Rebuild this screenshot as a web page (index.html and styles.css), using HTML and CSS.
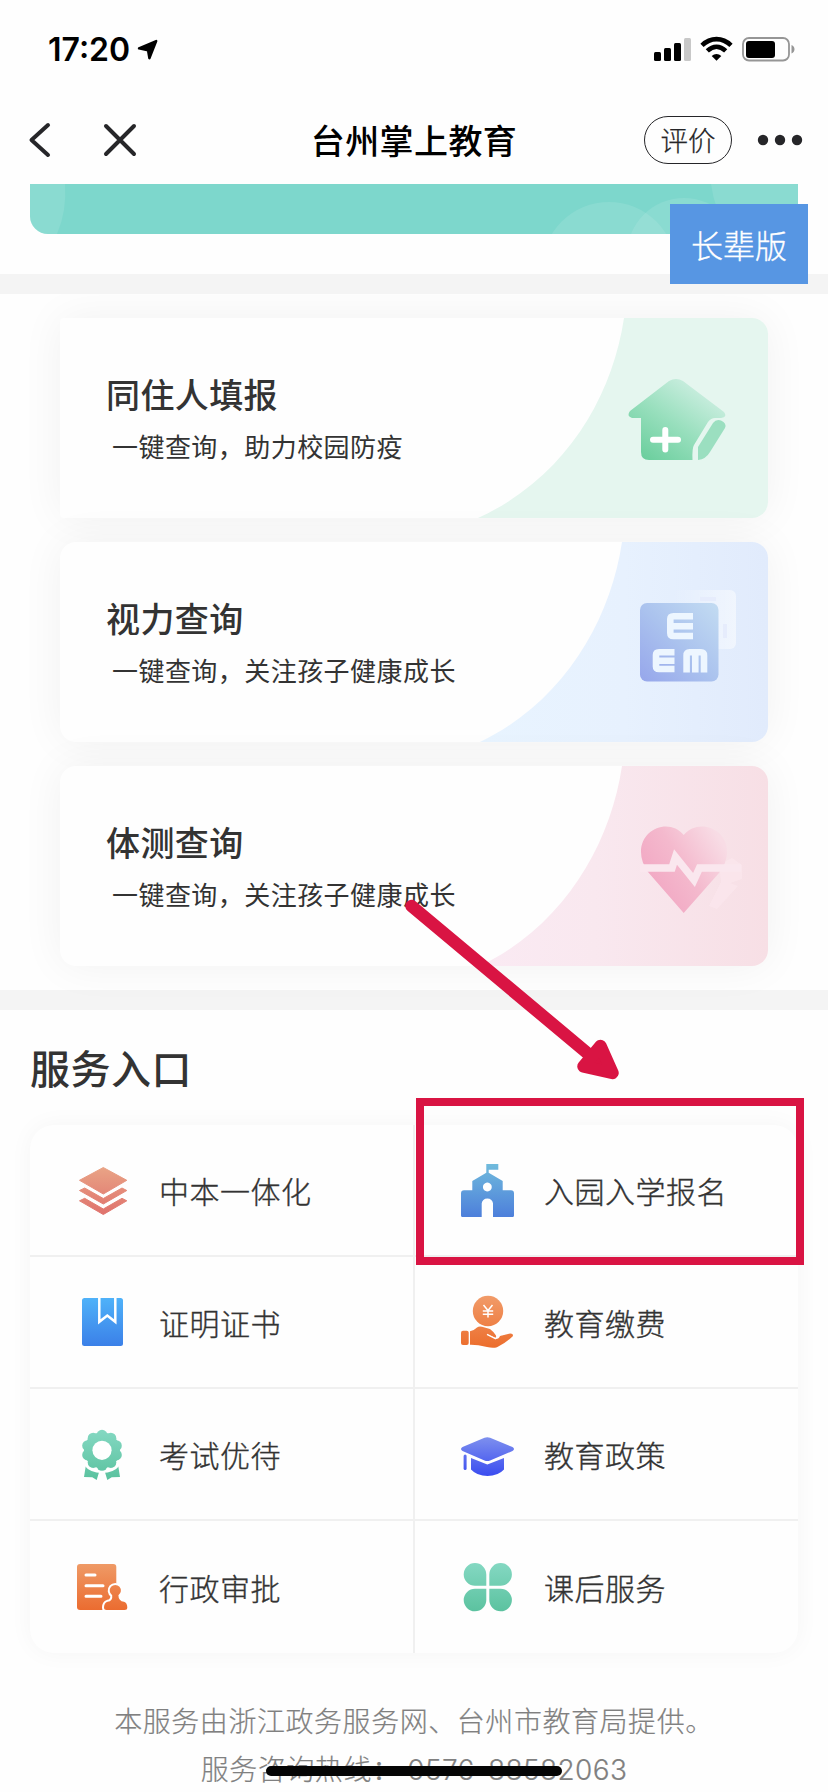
FILE: index.html
```html
<!DOCTYPE html>
<html lang="zh-CN">
<head>
<meta charset="utf-8">
<title>台州掌上教育</title>
<link rel="stylesheet" href="styles.css">
</head>
<body>
<div class="screen">
  <header class="status">
    <span class="clock">17:20</span>
    <svg class="locate" width="22" height="22" viewBox="0 0 22 22"><path d="M2 9.4 19.2 2 12.4 19.2 11 11.4Z" fill="#000" stroke="#000" stroke-width="2.4" stroke-linejoin="round"/></svg>
    <svg class="indicators" width="144" height="28" viewBox="0 0 144 28">
      <rect x="1" y="16" width="7" height="9" rx="1.5"/><rect x="11" y="12" width="7" height="13" rx="1.5"/><rect x="21" y="7" width="7" height="18" rx="1.5"/><rect x="31" y="2" width="7" height="23" rx="1.5" fill="#c8c8c8"/>
      <g fill="none" stroke="#000" stroke-width="4.6"><path d="M49 9.3C57.500 1 69.500 1 78 9.300"/><path d="M54.300 14.900C60 9.500 67 9.500 72.700 14.900"/></g>
      <path d="M58.700 20C61.500 17.300 65.500 17.300 68.300 20L63.500 24.800Z"/>
      <rect x="90" y="2" width="46" height="22.500" rx="6" fill="none" stroke="#969696" stroke-width="1.800"/>
      <rect x="93" y="5" width="29" height="17" rx="3"/><path d="M138.500 9C142.500 10.500 142.500 16 138.500 17.500Z" fill="#969696"/>
    </svg>
  </header>
  <nav class="nav">
    <svg class="nav-icons" width="114" height="42" viewBox="0 0 114 42"><g fill="none" stroke="#262629" stroke-width="4" stroke-linecap="round" stroke-linejoin="round"><path d="M22 6 5.500 21 22 36"/><path d="M80 7 108 35M108 7 80 35"/></g></svg>
    <h1 class="nav-title">台州掌上教育</h1>
    <div class="nav-actions">
      <span class="pill">评价</span>
      <svg width="48" height="12" viewBox="0 0 48 12" fill="#262629"><circle cx="7" cy="6" r="5.200"/><circle cx="24" cy="6" r="5.200"/><circle cx="41" cy="6" r="5.200"/></svg>
    </div>
  </nav>
  <section class="banner-wrap">
    <svg class="banner" width="768" height="50" viewBox="0 0 768 50"><rect width="768" height="50" fill="#7dd7cc"/><g fill="#fff" fill-opacity=".1"><path d="M0 0H35Q37 27 27 50H0Z"/><circle cx="579" cy="85" r="67"/><circle cx="654" cy="71" r="57"/><path d="M681 0H768V50H700Q684 25 681 0Z"/></g></svg>
    <span class="elder">长辈版</span>
  </section>
  <section class="cards">
    <article class="card card-flat">
      <div class="card-text"><h2>同住人填报</h2><p>一键查询，助力校园防疫</p></div>
      <svg class="art" width="300" height="200" viewBox="0 0 300 200">
        <defs><linearGradient id="house" x1="0" y1="1" x2=".75" y2=".1"><stop offset="0" stop-color="#62cb97"/><stop offset=".55" stop-color="#98dfbd"/><stop offset="1" stop-color="#cbeee0"/></linearGradient></defs>
        <path d="M156 0H300V200H10C97 160 144 80 156 0Z" fill="#e5f6ef"/>
        <path d="M201 63Q208 59 215 63L256 94Q260 99 253 100H247Q243 100 240 104L226 127Q224 130 224.500 142H181Q173 142 173 134V100H164Q158 98 162 93Z" fill="url(#house)"/>
        <path d="M230 129 245 105Q248 101 253 102.500 259 105 257 110L242 134Q238 141 230 142Z" fill="#9bdfc0"/>
        <path d="M197.300 112V131.500M185 121.700H210" stroke="#fff" stroke-width="6" stroke-linecap="round"/>
      </svg>
    </article>
    <article class="card">
      <div class="card-text"><h2>视力查询</h2><p>一键查询，关注孩子健康成长</p></div>
      <svg class="art" width="300" height="200" viewBox="0 0 300 200">
        <defs><linearGradient id="sky"><stop offset="0" stop-color="#e8f4ff"/><stop offset=".5" stop-color="#e7f1fe"/><stop offset="1" stop-color="#e1ebfc"/></linearGradient><linearGradient id="chart" x1="0" y1="1" x2="1" y2="0"><stop offset="0" stop-color="#96a6eb"/><stop offset=".5" stop-color="#abc3ee"/><stop offset="1" stop-color="#c3dcf2"/></linearGradient><linearGradient id="paper"><stop offset="0" stop-color="#fff" stop-opacity="0"/><stop offset="1" stop-color="#fff" stop-opacity=".5"/></linearGradient></defs>
        <path d="M154 0H300V200H12C95 160 142 80 154 0Z" fill="url(#sky)"/>
        <rect x="205" y="48" width="63" height="59" rx="6" fill="url(#paper)"/><path d="M232 57H248M257 82V96" stroke="#e6ecfc" stroke-width="4"/>
        <rect x="172" y="61" width="78.500" height="78.500" rx="7" fill="url(#chart)"/>
        <g fill="none" stroke="#edf6ff" stroke-width="6.600"><path d="M225 74.300H205.500Q202.300 74.300 202.300 77V91Q202.300 94 205.500 94H225M202 84.200H225"/><path d="M206.500 110.300H191Q188 110.300 188 113V124.500Q188 127 191 127H206.500M188 118.700H206.500"/><path d="M218.600 130.500V113.500Q218.600 110.300 221.500 110.300H233Q236 110.300 236 113.500V130.500M227.300 110V130.500"/></g>
      </svg>
    </article>
    <article class="card">
      <div class="card-text"><h2>体测查询</h2><p>一键查询，关注孩子健康成长</p></div>
      <svg class="art" width="300" height="200" viewBox="0 0 300 200">
        <defs><linearGradient id="rose"><stop offset="0" stop-color="#faeaf3"/><stop offset=".4" stop-color="#f9e8ef"/><stop offset="1" stop-color="#f7dfe5"/></linearGradient><linearGradient id="heart" x1=".15" y1=".7" x2=".95" y2=".2"><stop offset="0" stop-color="#f2a9c4"/><stop offset=".45" stop-color="#f4b9cd"/><stop offset="1" stop-color="#f8dce5"/></linearGradient></defs>
        <path d="M154 0H300V200H12C95 160 142 80 154 0Z" fill="url(#rose)"/>
        <path d="M251 98 264 92 274 99V113L262 117 270 120 249 143 241 140 253 116Z" fill="#fbe8ef" fill-opacity=".6"/>
        <path d="M215.700 147 180 106Q173 96 173 86C173 62 202 52 215.700 69 230 52 259 62 259 86Q259 97 251 107Z" fill="url(#heart)"/>
        <path d="M172 102H204L207.500 91 226 114 231.500 102H273" fill="none" stroke="#fae7ee" stroke-width="7.500"/>
      </svg>
    </article>
  </section>
  <section class="services">
    <h2 class="services-title">服务入口</h2>
    <div class="grid">
      <a class="cell">
        <svg width="56" height="56" viewBox="0 0 56 56"><defs><linearGradient id="coral" gradientUnits="userSpaceOnUse" x1="0" y1="5" x2="0" y2="53"><stop stop-color="#e9a486"/><stop offset="1" stop-color="#df716c"/></linearGradient></defs><g fill="url(#coral)" stroke="url(#coral)" stroke-linejoin="round"><path d="M29.300 5.500 52.800 18.300 29.300 32 5.500 18.300Z"/><path d="M10.700 26 29.300 36.500 48 26 52.800 28.500 29.300 42 5.500 28.500Z"/><path d="M10.700 36.300 29.300 47 48 36.300 52.800 38.800 29.300 52.500 5.500 38.800Z"/></g></svg>
        <span>中本一体化</span></a>
      <a class="cell">
        <svg width="56" height="56" viewBox="0 0 56 56"><defs><linearGradient id="school" x1="0" y1="0" x2="0" y2="1"><stop stop-color="#70bbdc"/><stop offset="1" stop-color="#4d7fdb"/></linearGradient></defs><path fill="url(#school)" fill-rule="evenodd" d="M26.300 2H38.300V7.700H28.700V10.800L42.700 19V28.300H51Q54 28.300 54 31.500V53.500Q54 55 52.500 55H33V41.500A5.600 5 0 0 0 21.700 41.500V55H2.500Q1 55 1 53.500V31.500Q1 28.300 4 28.300H12.300V19L26.300 10.800ZM27.300 20.600A4.400 4.400 0 1 0 27.400 20.600Z"/></svg>
        <span>入园入学报名</span></a>
      <a class="cell">
        <svg width="56" height="56" viewBox="0 0 56 56"><defs><linearGradient id="book" x1="0" y1="0" x2="0" y2="1"><stop stop-color="#4fb2f9"/><stop offset="1" stop-color="#3b80e8"/></linearGradient></defs><rect x="8" y="4" width="41" height="48" rx="2.500" fill="url(#book)"/><path d="M25.300 4V27.800L33.300 21.500 41.300 27.800V4" fill="none" stroke="#fff" stroke-width="2.500"/></svg>
        <span>证明证书</span></a>
      <a class="cell">
        <svg width="56" height="56" viewBox="0 0 56 56"><defs><linearGradient id="pay" gradientUnits="userSpaceOnUse" x1="0" y1="2" x2="0" y2="54"><stop stop-color="#f19b69"/><stop offset="1" stop-color="#ec6d2c"/></linearGradient></defs><g fill="url(#pay)"><circle cx="28" cy="17" r="15.200"/><rect x="1" y="36.700" width="7.700" height="14.300" rx="2"/><path d="M10 37.300Q14 36.500 17 33.500 19 32 22 32.800L30 35Q34 38 36 41.500 36.500 43.500 35 43.800L27 40.200 36 45Q39 45 40 42L49 39.700Q53 39 53 42 46 49 37 53.200 33 54.500 27 53 17 50.500 10 50.700Z"/></g><path d="M23.500 11 28 16.500 32.500 11M22.800 17H33.200M22.800 20.200H33.200M28 16.500V23.500M27 40.400 36 44.800" fill="none" stroke="#fff" stroke-width="1.500"/></svg>
        <span>教育缴费</span></a>
      <a class="cell">
        <svg width="56" height="56" viewBox="0 0 56 56"><defs><linearGradient id="mint" gradientUnits="userSpaceOnUse" x1="0" y1="4" x2="0" y2="53"><stop stop-color="#84d8c2"/><stop offset="1" stop-color="#5bc29f"/></linearGradient></defs><g fill="url(#mint)"><path d="M12 38.500 25 46.300 22.700 54 18.300 51.300 10 51Z"/><path d="M44 38.500 31 46.300 33.300 54 37.700 51.300 46 51Z"/></g><path d="M11 38Q17 45.500 28 45.500T45 38" fill="none" stroke="#fff" stroke-width="3"/><g fill="url(#mint)"><circle cx="28" cy="24.300" r="18"/><circle cx="28" cy="9.300" r="5.500"/><circle cx="36.800" cy="12.200" r="5.500"/><circle cx="42.300" cy="19.700" r="5.500"/><circle cx="42.300" cy="28.900" r="5.500"/><circle cx="36.800" cy="36.400" r="5.500"/><circle cx="28" cy="39.300" r="5.500"/><circle cx="19.200" cy="36.400" r="5.500"/><circle cx="13.700" cy="28.900" r="5.500"/><circle cx="13.700" cy="19.700" r="5.500"/><circle cx="19.200" cy="12.200" r="5.500"/></g><circle cx="28" cy="24.300" r="9.600" fill="#fff"/></svg>
        <span>考试优待</span></a>
      <a class="cell">
        <svg width="56" height="56" viewBox="0 0 56 56"><defs><linearGradient id="cap" gradientUnits="userSpaceOnUse" x1="0" y1="11" x2="0" y2="50"><stop stop-color="#7e90ee"/><stop offset="1" stop-color="#3a4cf0"/></linearGradient></defs><g fill="url(#cap)"><path d="M24.500 11.800Q27.300 10.600 30.100 11.800L52.500 21Q55.500 23 52.500 25L30.100 34.500Q27.300 35.700 24.500 34.500L2.500 25Q-.5 23 2.500 21Z"/><rect x="3.600" y="28.500" width="3" height="15.500" rx="1.500"/><path d="M11 32 27.300 38.500 44 32V43.500Q38 50 27.500 50T11 43.500Z"/></g></svg>
        <span>教育政策</span></a>
      <a class="cell">
        <svg width="56" height="56" viewBox="0 0 56 56"><defs><linearGradient id="doc" gradientUnits="userSpaceOnUse" x1="0" y1="5" x2="0" y2="51"><stop stop-color="#ef9a66"/><stop offset="1" stop-color="#eb6c30"/></linearGradient></defs><rect x="3" y="5" width="39.300" height="46" rx="3" fill="url(#doc)"/><path d="M12 16H21M12 26.700H29M12 37.300H27" stroke="#fff" stroke-width="3" stroke-linecap="round"/><path d="M38.200 36.200A5.600 5.600 0 1 1 44.400 36.200Q44.500 42 50 42.800 53.300 44 53.300 48.500 53.300 51 50.500 51H32.500Q30 51 30 48.500 30 44 33.500 42.800 39 42 38.200 36.200Z" fill="url(#doc)" stroke="#fff" stroke-width="4" paint-order="stroke"/></svg>
        <span>行政审批</span></a>
      <a class="cell">
        <svg width="56" height="56" viewBox="0 0 56 56"><g fill="url(#mint)"><path d="M26.300 26.700H15.200A11.300 11.300 0 1 1 26.300 15.400Z"/><path d="M29.300 26.700H40.400A11.300 11.300 0 1 0 29.300 15.400Z"/><path d="M26.300 29.700H15.200A11.300 11.300 0 1 0 26.300 41Z"/><path d="M29.300 29.700H40.400A11.300 11.300 0 1 1 29.300 41Z"/></g></svg>
        <span>课后服务</span></a>
    </div>
  </section>
  <footer class="footer">
    <p>本服务由浙江政务服务网、台州市教育局提供。</p>
    <p>服务咨询热线： <span class="phone">0576-88582063</span></p>
  </footer>
  <div class="highlight"></div>
  <svg class="pointer" width="220" height="190" viewBox="0 0 220 190"><g fill="#d91443" stroke="#d91443" stroke-width="12.500" stroke-linejoin="round" stroke-linecap="round"><path d="M11.500 16 192 167"/><path d="M200.500 156 183.500 176.500 212.500 183Z"/></g></svg>
  <div class="home-bar"></div>
</div>
</body>
</html>
```
FILE: styles.css
```css
* { box-sizing: border-box; }
body, h1, h2, p { margin: 0; }
body {
  background: #fff;
  color: #333;
  font-family: "Noto Sans CJK SC", sans-serif;
}
.screen {
  position: relative;
  display: flex;
  flex-direction: column;
  width: 828px;
  height: 1792px;
  overflow: hidden;
  background: #fefefe;
}
.status, .nav, .banner-wrap, .cards, .services { flex: none; }
.status {
  display: flex;
  align-items: center;
  height: 96px;
  padding: 4px 31px 0 48px;
}
.clock {
  width: 89px;
  color: #000;
  font: 600 32px/40px Inter, sans-serif;
}
.indicators { margin-left: auto; }
.nav {
  display: grid;
  grid-template-columns: 1fr auto 1fr;
  align-items: center;
  height: 88px;
  padding: 0 24px 0 26px;
}
.nav-title {
  margin-left: -2px;
  color: #000;
  font-size: 34px;
  font-weight: 500;
  line-height: 48px;
  letter-spacing: .4px;
}
.nav-actions {
  display: flex;
  justify-content: flex-end;
  align-items: center;
  gap: 24px;
}
.pill {
  width: 88px;
  height: 48px;
  border: 1.5px solid #262629;
  border-radius: 24px;
  color: #262629;
  font-size: 27.5px;
  font-weight: 300;
  line-height: 45px;
  text-align: center;
  -webkit-text-stroke: .25px currentColor;
}
.banner-wrap {
  position: relative;
  height: 110px;
  padding: 0 30px;
  border-bottom: 20px solid #f4f4f4;
}
.banner { display: block; border-radius: 0 0 18px 18px; }
.elder {
  position: absolute;
  z-index: 1;
  top: 20px;
  right: 20px;
  width: 138px;
  height: 80px;
  background: #5796e3;
  color: #fff;
  font-size: 32px;
  font-weight: 300;
  line-height: 80px;
  text-align: center;
  -webkit-text-stroke: .3px currentColor;
}
.cards {
  display: flex;
  flex-direction: column;
  gap: 24px;
  height: 716px;
  padding: 24px 60px;
  border-bottom: 20px solid #f4f4f4;
}
.card {
  display: flex;
  flex: none;
  justify-content: space-between;
  height: 200px;
  border-radius: 16px;
  background: #fefefe;
  box-shadow: 0 0 44px rgba(0, 0, 0, .055);
}
.card-flat { border-radius: 4px 16px 16px 4px; }
.card-text {
  width: 408px;
  padding: 52px 0 0 46px;
  white-space: nowrap;
}
.card h2 {
  font-size: 34px;
  font-weight: 500;
  line-height: 48px;
  letter-spacing: .4px;
}
.card p {
  margin-top: 9px;
  padding-left: 6px;
  font-size: 26px;
  line-height: 38px;
  letter-spacing: .45px;
}
.art { flex: none; border-radius: 0 16px 16px 0; }
.services { padding: 30px 30px 0; }
.services-title {
  height: 85px;
  font-size: 40px;
  font-weight: 500;
  line-height: 54px;
  letter-spacing: .5px;
}
.grid {
  display: grid;
  grid-template-columns: 385px 383px;
  grid-template-rows: repeat(4, 132px);
  border-radius: 24px;
  background: #fefefe;
  box-shadow: 0 0 24px rgba(0, 0, 0, .04);
}
.cell {
  display: flex;
  align-items: center;
  gap: 29px;
  padding-left: 44px;
  border-bottom: 2px solid #f0f0f0;
  font-size: 30px;
  font-weight: 300;
  letter-spacing: .5px;
  -webkit-text-stroke: .35px currentColor;
}
.cell:nth-child(odd) { border-right: 2px solid #f0f0f0; }
.cell:nth-child(even) { padding-left: 45px; gap: 28px; }
.cell:nth-last-child(-n+2) { border-bottom: 0; }
.footer {
  padding-top: 43px;
  color: #808080;
  font-size: 28px;
  font-weight: 300;
  line-height: 48px;
  letter-spacing: .55px;
  text-align: center;
  white-space: nowrap;
  -webkit-text-stroke: .2px currentColor;
}
.footer p { height: 48px; }
.phone { font-family: Inter, sans-serif; letter-spacing: .4px; }
.highlight {
  position: absolute;
  left: 416px;
  top: 1098px;
  width: 388px;
  height: 167px;
  border: 8px solid #d91443;
}
.pointer { position: absolute; left: 400px; top: 890px; }
.home-bar {
  position: absolute;
  left: 266px;
  top: 1766px;
  width: 296px;
  height: 10px;
  border-radius: 5px;
  background: #050505;
}
```
